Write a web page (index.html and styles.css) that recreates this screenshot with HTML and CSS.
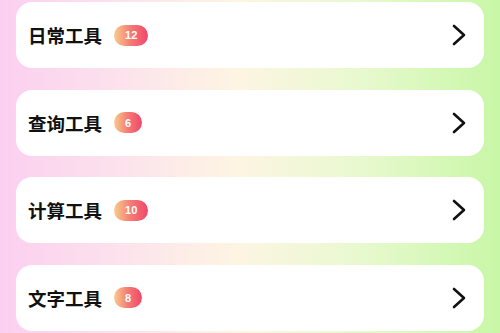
FILE: index.html
```html
<!DOCTYPE html>
<html lang="zh">
<head>
<meta charset="utf-8">
<link rel="stylesheet" href="styles.css">
</head>
<body>
<div class="list">
  <div class="card"><span class="title">日常工具</span><span class="badge">12</span><svg class="chev" viewBox="0 0 14 22"><path d="M2 2 L12 11 L2 20" /></svg></div>
  <div class="card"><span class="title">查询工具</span><span class="badge">6</span><svg class="chev" viewBox="0 0 14 22"><path d="M2 2 L12 11 L2 20" /></svg></div>
  <div class="card"><span class="title">计算工具</span><span class="badge">10</span><svg class="chev" viewBox="0 0 14 22"><path d="M2 2 L12 11 L2 20" /></svg></div>
  <div class="card"><span class="title">文字工具</span><span class="badge">8</span><svg class="chev" viewBox="0 0 14 22"><path d="M2 2 L12 11 L2 20" /></svg></div>
</div>
</body>
</html>
```
FILE: styles.css
```css
html, body {
  margin: 0;
  height: 100%;
}
body {
  background: linear-gradient(90deg, #fbcff0 0%, #fce3ec 25%, #fdf5e2 48%, #e8f9cf 72%, #c8f7a6 100%);
  font-family: "Noto Sans CJK SC", "Noto Sans", sans-serif;
  overflow: hidden;
}
.list {
  display: flex;
  flex-direction: column;
  gap: 21.5px;
  padding: 2px 16px 0 16px;
}
.card {
  height: 66px;
  background: #ffffff;
  border-radius: 16px;
  display: flex;
  align-items: center;
  padding: 0 18px 0 12px;
}
.title {
  font-size: 18.5px;
  font-weight: 700;
  color: #111111;
  letter-spacing: 0;
}
.badge {
  margin-left: 12px;
  height: 21px;
  padding: 0 11px;
  border-radius: 11px;
  background: linear-gradient(90deg, #f8cc8c 0%, #f57a74 50%, #f0476b 100%);
  color: #ffffff;
  font-family: "Liberation Sans", "DejaVu Sans", sans-serif;
  font-size: 11px;
  font-weight: 700;
  display: flex;
  align-items: center;
  justify-content: center;
}
.chev {
  margin-left: auto;
  width: 14px;
  height: 22px;
  fill: none;
  stroke: #111111;
  stroke-width: 2.6;
  stroke-linecap: round;
  stroke-linejoin: round;
}
```
